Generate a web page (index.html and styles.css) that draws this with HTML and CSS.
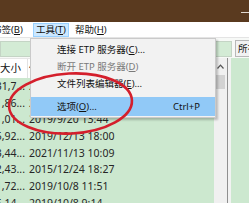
FILE: index.html
```html
<!DOCTYPE html>
<html lang="zh">
<head>
<meta charset="utf-8">
<link rel="stylesheet" href="styles.css">
</head>
<body>
<div class="app">
  <div class="titlebar"><span class="min"></span></div>
  <div class="menubar">
    <span class="mi first">书签(<u>B</u>)</span>
    <span class="mi active">工具(<u>T</u>)</span>
    <span class="mi">帮助(<u>H</u>)</span>
  </div>
  <div class="toolbar">
    <div class="pathbox"></div>
    <div class="btn">所有文件</div>
  </div>
  <div class="content">
    <div class="list">
      <div class="lhead"><div class="c-size">大小</div><div class="c-date">修改日期</div></div>
      <div class="row"><div class="c-size"><span>31,7...</span></div><div class="c-date">2019/9/20 13:40</div></div>
      <div class="row"><div class="c-size"><span>1,86...</span></div><div class="c-date">2019/9/20 13:42</div></div>
      <div class="row"><div class="c-size"><span>1,01...</span></div><div class="c-date">2019/9/20 13:44</div></div>
      <div class="row"><div class="c-size"><span>5,92...</span></div><div class="c-date">2019/12/13 18:00</div></div>
      <div class="row"><div class="c-size"><span>3,44...</span></div><div class="c-date">2021/11/13 10:09</div></div>
      <div class="row"><div class="c-size"><span>2,43...</span></div><div class="c-date">2015/12/24 18:27</div></div>
      <div class="row"><div class="c-size"><span>1,72...</span></div><div class="c-date">2019/10/8 11:51</div></div>
      <div class="row"><div class="c-size"><span>5,14...</span></div><div class="c-date">2019/10/8 9:14</div></div>
    </div>
    <div class="vscroll">
      <div class="up"><svg width="7" height="5" viewBox="0 0 7 5"><path d="M0.5 4.5 L3.5 1.2 L6.5 4.5" fill="none" stroke="#555" stroke-width="1.2"/></svg></div>
      <div class="thumb"></div>
    </div>
    <div class="divider"></div>
    <div class="rpane"></div>
  </div>

  <div class="menu">
    <div class="it">连接 ETP 服务器(<u>C</u>)...</div>
    <div class="it disabled">断开 ETP 服务器(<u>D</u>)</div>
    <div class="it">文件列表编辑器(<u>E</u>)...</div>
    <div class="it hl"><span>选项(<u>O</u>)...</span><span class="sc">Ctrl+P</span></div>
  </div>

  <svg class="mark" width="249" height="203" viewBox="0 0 249 203">
    <ellipse cx="70.5" cy="103.5" rx="61.5" ry="30" transform="rotate(-3 70.5 103.5)" fill="none" stroke="#d41f2c" stroke-width="2.6"/>
  </svg>
</div>
</body>
</html>
```
FILE: styles.css
```css
* { box-sizing: border-box; }
html, body { margin: 0; padding: 0; background: #fff; }
body {
  font-family: "Noto Sans", "Noto Sans CJK SC", sans-serif;
  font-size: 9.5px;
  color: #111;
}
u { text-decoration: underline; text-underline-offset: 1px; }

.app {
  position: relative;
  width: 249px;
  height: 203px;
  overflow: hidden;
  display: flex;
  flex-direction: column;
}

.titlebar {
  height: 22px;
  flex: none;
  background: #5a3a1f;
  display: flex;
  justify-content: flex-end;
}
.min {
  width: 8px;
  height: 1px;
  margin-top: 12px;
  background: #e2d8ce;
}

.menubar {
  height: 16px;
  flex: none;
  display: flex;
  align-items: center;
  background: #fff;
  border-bottom: 1px solid #e4e4e4;
  white-space: nowrap;
}
.mi {
  line-height: 12px;
  padding: 0 2px;
  border: 1px solid transparent;
  margin-right: 3px;
}
.mi.first { margin-left: -11px; margin-right: 7px; }
.mi.active { background: #cce8ff; border-color: #99d1ff; }

.toolbar {
  height: 20px;
  flex: none;
  display: flex;
  align-items: flex-start;
  background: #f7f9f7;
  white-space: nowrap;
}
.pathbox {
  width: 232px;
  height: 16px;
  margin-top: 3px;
  flex: none;
  background: #d3ebd5;
  border: 1px solid #c4d4c5;
}
.btn {
  flex: none;
  margin-left: 3px;
  margin-top: 2px;
  height: 17px;
  line-height: 15px;
  padding: 0 2px;
  background: #f2f2f2;
  border: 1px solid #b8b8b8;
}

.content {
  flex: 1;
  display: flex;
  min-height: 0;
}
.list {
  width: 214px;
  flex: none;
  background: #cce8cf;
  font-size: 10.5px;
}
.lhead {
  height: 20px;
  display: flex;
  background: #fff;
  border-top: 1px solid #e6e6e6;
  line-height: 19px;
}
.lhead .c-size { border-right: 1px solid #e2e2e2; padding-left: 0; }
.row {
  height: 16.7px;
  display: flex;
  line-height: 16.7px;
  color: #262626;
}
.c-size {
  width: 28px;
  flex: none;
  overflow: hidden;
  white-space: nowrap;
}
.row .c-size {
  display: flex;
  justify-content: flex-end;
  padding-right: 3px;
}
.row .c-size span { flex: none; }
.c-date {
  padding-left: 1px;
  white-space: nowrap;
}

.vscroll {
  width: 13px;
  flex: none;
  background: #f0f0f0;
  display: flex;
  flex-direction: column;
  align-items: center;
}
.up {
  height: 17px;
  display: flex;
  align-items: center;
  justify-content: center;
}
.thumb {
  width: 9px;
  height: 14px;
  background: #d2d2d2;
}
.divider { width: 1px; flex: none; background: #8f8f8f; }
.rpane {
  flex: 1;
  background: #cce8cf;
  border-left: 3px solid #f2f2f2;
}

.menu {
  position: absolute;
  left: 30px;
  top: 38px;
  width: 186px;
  padding: 2px 0 1px;
  background: #f2f2f2;
  border: 1px solid #cacaca;
  box-shadow: 2px 2px 2px rgba(0, 0, 0, 0.22);
  white-space: nowrap;
}
.it {
  height: 17px;
  line-height: 17px;
  padding-left: 26px;
  padding-right: 15px;
  color: #111;
}
.it.disabled { color: #7a7a7a; }
.it.hl {
  margin-top: 5px;
  height: 19px;
  line-height: 19px;
  background: #91c9f7;
  display: flex;
  justify-content: space-between;
}

.mark {
  position: absolute;
  left: 0;
  top: 0;
  pointer-events: none;
}
```
